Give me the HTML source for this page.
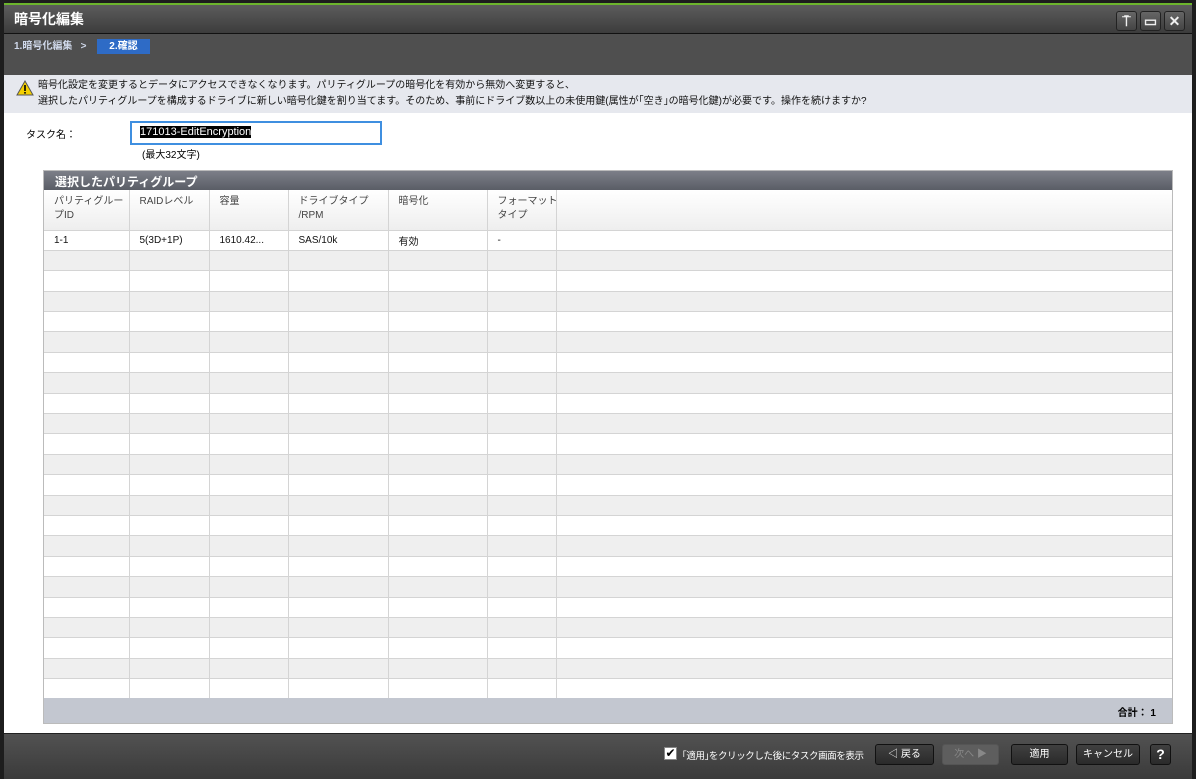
<!DOCTYPE html>
<html><head><meta charset="utf-8"><style>
*{margin:0;padding:0;box-sizing:border-box}
body{width:1196px;height:777px;background:#1d1d1d;font-family:"Liberation Sans","Noto Sans CJK JP",sans-serif;font-size:11px;position:relative;overflow:hidden}
.win{position:absolute;left:4px;top:3px;width:1188px;height:774px;background:#fff;border-top:2px solid #6cb52c}
.title{position:absolute;left:0;top:0;width:100%;height:29px;background:linear-gradient(#5c5c5c,#3c3c3c);border-bottom:1px solid #111;color:#fff;font-weight:bold;font-size:14px;padding:4px 10px}
.tb{position:absolute;top:6px;width:21px;height:20px;border:1px solid #222;border-radius:3px;background:linear-gradient(#666,#444);color:#eee;text-align:center;font-size:14px;line-height:18px}
.crumb{position:absolute;left:0;top:29px;width:100%;height:41px;background:#4f4f4f;color:#cfd8ea;font-weight:bold;font-size:10px;padding:3px 10px}
.crumb .cur{background:#2e6bc6;color:#fff;padding:2px 12px;margin-left:8px}
.warn{position:absolute;left:0;top:70px;width:100%;height:38px;background:#e6e8ee;padding:3px 0 0 34px;line-height:16px;color:#111;font-size:10px}
.tri{position:absolute;left:12px;top:5px}
.lbl{position:absolute;left:22px;top:121px;font-size:10px}
.inp{position:absolute;left:126px;top:116px;width:252px;height:24px;border:2px solid #3f8fe0;padding:3px 8px}
.inp span{background:#000;color:#fff}
.max{position:absolute;left:138px;top:141px;font-size:10px}
.panel{position:absolute;left:39px;top:165px;width:1130px;height:554px;background:#fff;border:1px solid #bbb;overflow:hidden}
.ph{height:19px;background:linear-gradient(#7c7f88,#5a5d66);color:#fff;font-weight:bold;font-size:12px;padding:2px 11px}
table{border-collapse:collapse;width:1129px;table-layout:fixed}
td{border-right:1px solid #d4d4d4;border-bottom:1px solid #d4d4d4;height:20.4px;padding:0 10px;white-space:nowrap;color:#111;font-size:10px;overflow:hidden}
tr.h td{height:40px;background:linear-gradient(#fff,#eee);vertical-align:top;padding-top:5px;line-height:14px;color:#444}
tr:nth-child(odd):not(.h) td{background:#efefef}
.foot{position:absolute;left:0;bottom:0;width:100%;height:25px;background:#c3c7d0;text-align:right;padding:6px 16px;font-weight:bold;font-size:10px}
.bot{position:absolute;left:0;top:728px;width:100%;height:46px;background:linear-gradient(#525252,#3a3a3a);border-top:1px solid #222}
.btn{position:absolute;top:10px;height:21px;border:1px solid #111;border-radius:3px;background:linear-gradient(#404040,#2a2a2a);color:#fff;text-align:center;line-height:19px;font-size:10px}
</style></head><body>
<div class="win">
<div class="title">暗号化編集
<div class="tb" style="left:1112px">⍑</div><div class="tb" style="left:1136px">▭</div><div class="tb" style="left:1160px">✕</div></div>
<div class="crumb">1.暗号化編集 &nbsp;&nbsp;&gt; <span class="cur">2.確認</span></div>
<div class="warn"><svg class="tri" width="18" height="16"><polygon points="9,1 17,15 1,15" fill="#f5d000" stroke="#555"/><rect x="8.2" y="5" width="1.6" height="6" fill="#000"/><rect x="8.2" y="12" width="1.6" height="1.6" fill="#000"/></svg>暗号化設定を変更するとデータにアクセスできなくなります。パリティグループの暗号化を有効から無効へ変更すると、<br>選択したパリティグループを構成するドライブに新しい暗号化鍵を割り当てます。そのため、事前にドライブ数以上の未使用鍵(属性が｢空き｣の暗号化鍵)が必要です。操作を続けますか?</div>
<div class="lbl">タスク名：</div>
<div class="inp"><span>171013-EditEncryption</span></div>
<div class="max">(最大32文字)</div>
<div class="panel"><div class="ph">選択したパリティグループ</div>
<table><colgroup><col style="width:85px"><col style="width:80px"><col style="width:79px"><col style="width:100px"><col style="width:99px"><col style="width:69px"><col></colgroup>
<tr class="h"><td>パリティグルー<br>プID</td><td>RAIDレベル</td><td>容量</td><td>ドライブタイプ<br>/RPM</td><td>暗号化</td><td>フォーマット<br>タイプ</td><td></td></tr>
<tr><td>1-1</td><td>5(3D+1P)</td><td>1610.42...</td><td>SAS/10k</td><td>有効</td><td>-</td><td></td></tr>
<tr><td></td><td></td><td></td><td></td><td></td><td></td><td></td></tr><tr><td></td><td></td><td></td><td></td><td></td><td></td><td></td></tr><tr><td></td><td></td><td></td><td></td><td></td><td></td><td></td></tr><tr><td></td><td></td><td></td><td></td><td></td><td></td><td></td></tr><tr><td></td><td></td><td></td><td></td><td></td><td></td><td></td></tr><tr><td></td><td></td><td></td><td></td><td></td><td></td><td></td></tr><tr><td></td><td></td><td></td><td></td><td></td><td></td><td></td></tr><tr><td></td><td></td><td></td><td></td><td></td><td></td><td></td></tr><tr><td></td><td></td><td></td><td></td><td></td><td></td><td></td></tr><tr><td></td><td></td><td></td><td></td><td></td><td></td><td></td></tr><tr><td></td><td></td><td></td><td></td><td></td><td></td><td></td></tr><tr><td></td><td></td><td></td><td></td><td></td><td></td><td></td></tr><tr><td></td><td></td><td></td><td></td><td></td><td></td><td></td></tr><tr><td></td><td></td><td></td><td></td><td></td><td></td><td></td></tr><tr><td></td><td></td><td></td><td></td><td></td><td></td><td></td></tr><tr><td></td><td></td><td></td><td></td><td></td><td></td><td></td></tr><tr><td></td><td></td><td></td><td></td><td></td><td></td><td></td></tr><tr><td></td><td></td><td></td><td></td><td></td><td></td><td></td></tr><tr><td></td><td></td><td></td><td></td><td></td><td></td><td></td></tr><tr><td></td><td></td><td></td><td></td><td></td><td></td><td></td></tr><tr><td></td><td></td><td></td><td></td><td></td><td></td><td></td></tr><tr><td></td><td></td><td></td><td></td><td></td><td></td><td></td></tr>
</table>
<div class="foot">合計： 1</div></div>
<div class="bot">
<div style="position:absolute;left:660px;top:13px;width:13px;height:13px;background:#fff;border:1px solid #888;color:#000;font-size:12px;line-height:11px;text-align:center">✔</div>
<div style="position:absolute;left:678px;top:14px;color:#fff;font-size:9.5px;letter-spacing:-0.4px">｢適用｣をクリックした後にタスク画面を表示</div>
<div class="btn" style="left:871px;width:59px">◁ 戻る</div>
<div class="btn" style="left:938px;width:57px;background:#5e5e5e;border-color:#555;color:#888">次へ ▶</div>
<div class="btn" style="left:1007px;width:57px">適用</div>
<div class="btn" style="left:1072px;width:64px">キャンセル</div>
<div class="btn" style="left:1146px;width:21px;font-weight:bold;font-size:14px">?</div>
</div>
</div>
</body></html>
